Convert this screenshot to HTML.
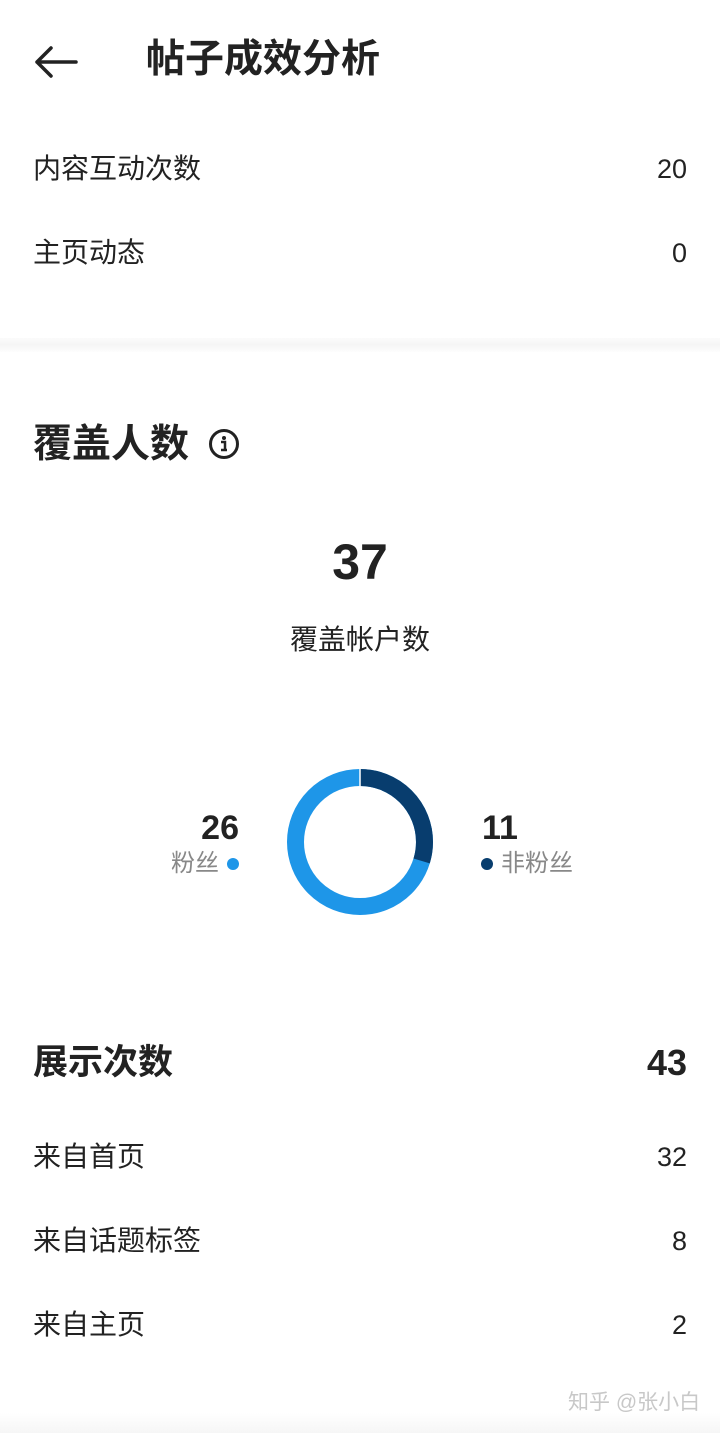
<!DOCTYPE html>
<html><head><meta charset="utf-8"><style>
body{margin:0;width:720px;height:1433px;background:#fff;position:relative;overflow:hidden;font-family:"Liberation Sans","Noto Sans CJK SC",sans-serif;color:#222}
.a{position:absolute;white-space:nowrap;line-height:1}
.r{right:33px;text-align:right}
.row{font-size:28px;color:#222}
.num{font-size:27px}
.b{font-weight:bold}
</style></head><body>
<svg class="a" style="left:32px;top:44px" width="48" height="36" viewBox="0 0 48 36"><path d="M44 18H5M19 4L5 18l14 14" fill="none" stroke="#222" stroke-width="3.5" stroke-linecap="round" stroke-linejoin="round"/></svg>
<div class="a b" style="left:146px;top:40px;font-size:39px">帖子成效分析</div>
<div class="a row" style="left:33px;top:155px">内容互动次数</div>
<div class="a num r" style="top:156px">20</div>
<div class="a row" style="left:33px;top:239px">主页动态</div>
<div class="a num r" style="top:240px">0</div>
<div class="a" style="left:0;top:338px;width:720px;height:14px;background:linear-gradient(#fbfbfb,#f5f5f5,#fdfdfd)"></div>
<div class="a b" style="left:33px;top:425px;font-size:39px">覆盖人数</div>
<svg class="a" style="left:208px;top:428px" width="32" height="32" viewBox="0 0 32 32"><circle cx="16" cy="16" r="13.5" fill="none" stroke="#222" stroke-width="3"/><circle cx="16" cy="10" r="2" fill="#222"/><path d="M13 14h4v8h2M13 22h6" fill="none" stroke="#222" stroke-width="2.5"/></svg>
<div class="a b" style="left:0;width:720px;text-align:center;top:537px;font-size:50px">37</div>
<div class="a" style="left:0;width:720px;text-align:center;top:626px;font-size:28px">覆盖帐户数</div>
<svg class="a" style="left:280px;top:762px" width="160" height="160" viewBox="0 0 160 160">
<g transform="rotate(-90 80 80)">
<circle cx="80" cy="80" r="64.5" fill="none" stroke="#1e96e8" stroke-width="17"/>
<circle cx="80" cy="80" r="64.5" fill="none" stroke="#083d6e" stroke-width="17" stroke-dasharray="120.5 300"/>
</g>
<line x1="80" y1="6" x2="80" y2="24" stroke="#fff" stroke-width="1.5"/>
</svg>
<div class="a b" style="right:481px;top:811px;font-size:34px">26</div>
<div class="a" style="left:171px;top:852px;font-size:24px;color:#888">粉丝</div>
<div class="a" style="left:227px;top:858px;width:12px;height:12px;border-radius:50%;background:#1e96e8"></div>
<div class="a b" style="left:482px;top:811px;font-size:34px">11</div>
<div class="a" style="left:481px;top:858px;width:12px;height:12px;border-radius:50%;background:#083d6e"></div>
<div class="a" style="left:501px;top:852px;font-size:24px;color:#888">非粉丝</div>
<div class="a b" style="left:33px;top:1045px;font-size:35px">展示次数</div>
<div class="a b r" style="top:1045px;font-size:36px">43</div>
<div class="a row" style="left:33px;top:1143px">来自首页</div>
<div class="a num r" style="top:1144px">32</div>
<div class="a row" style="left:33px;top:1227px">来自话题标签</div>
<div class="a num r" style="top:1228px">8</div>
<div class="a row" style="left:33px;top:1311px">来自主页</div>
<div class="a num r" style="top:1312px">2</div>
<div class="a" style="left:0;top:1413px;width:720px;height:20px;background:linear-gradient(#fff,#f6f6f6)"></div>
<div class="a" style="left:568px;top:1392px;font-size:21px;color:#c8c8c8">知乎 @张小白</div>
</body></html>
